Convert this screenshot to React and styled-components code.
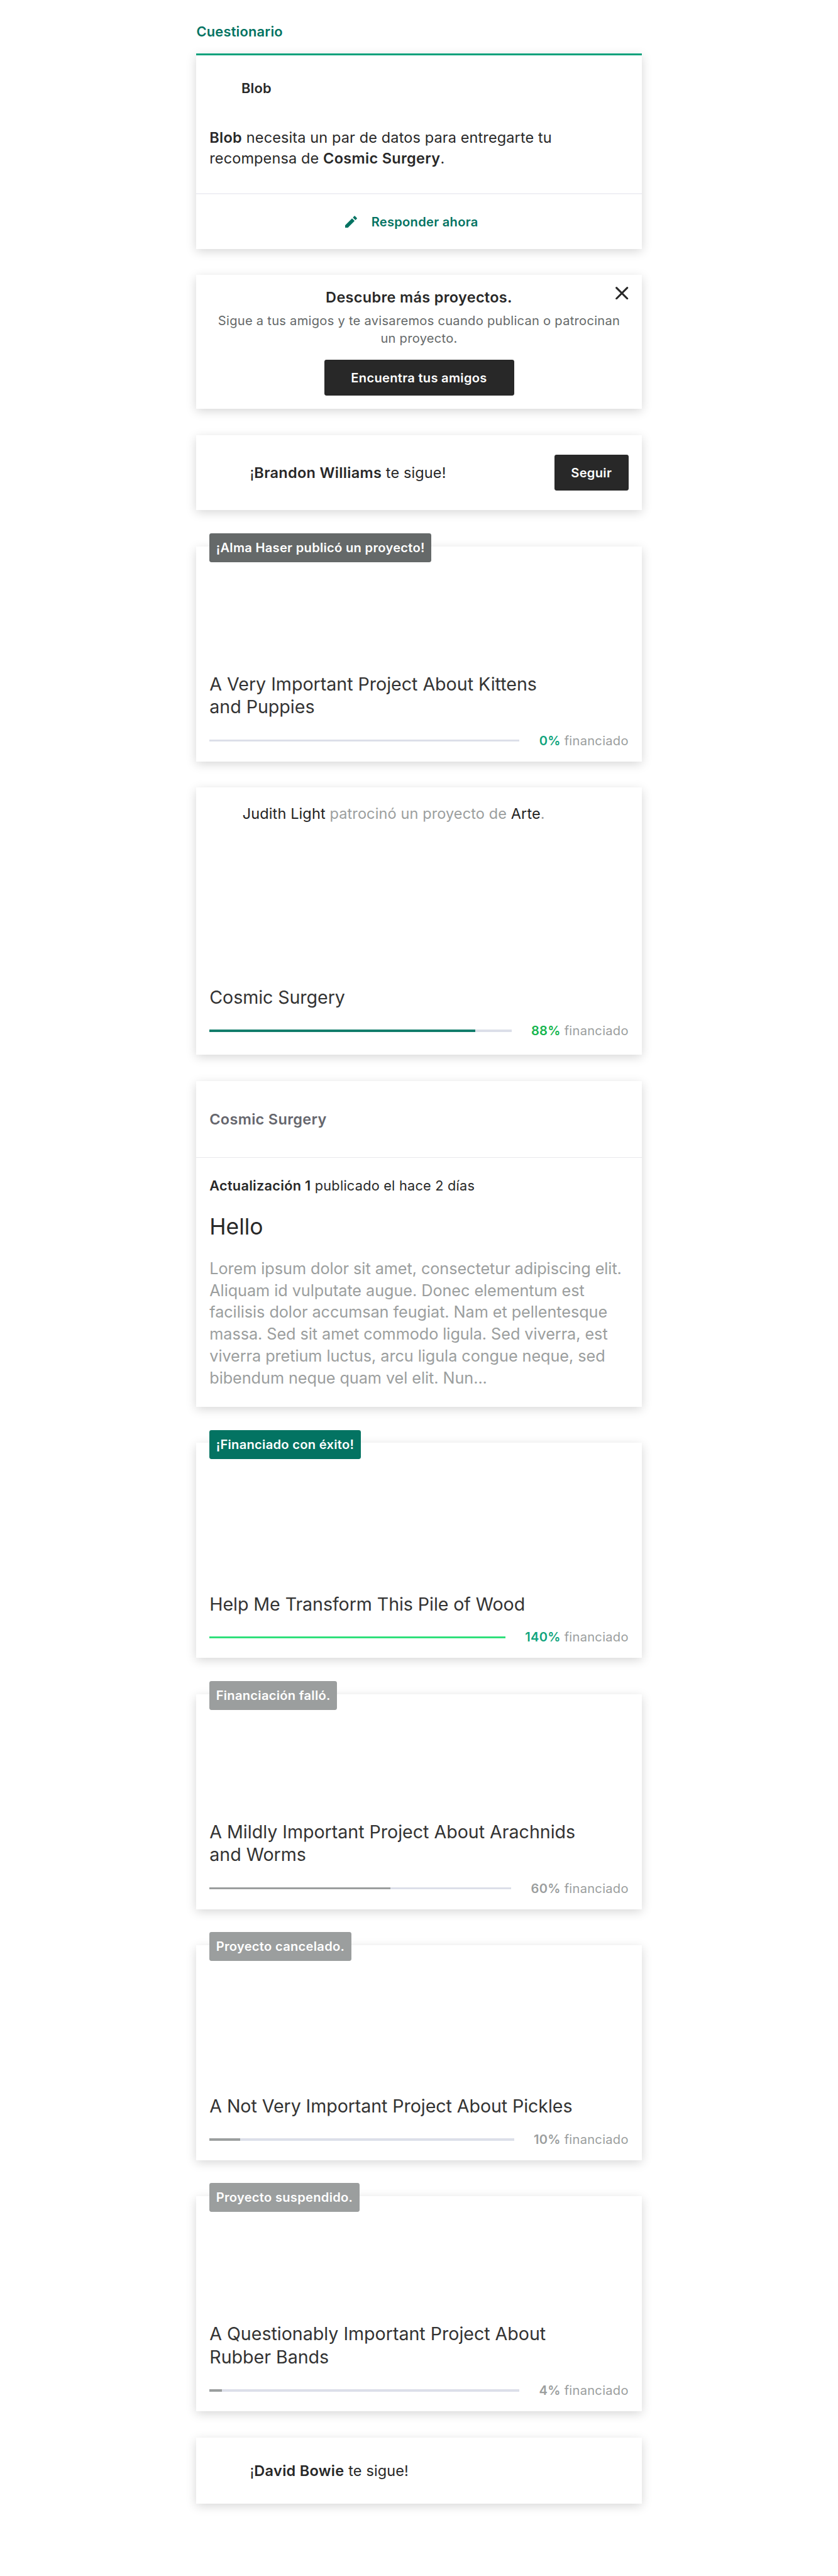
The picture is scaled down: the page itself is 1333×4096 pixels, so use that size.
import React from "react";
import styled, { createGlobalStyle } from "styled-components";

/* 1rem = 10 design units */
const GlobalStyle = createGlobalStyle`
  html { font-size: 8.6784px; }
  body {
    margin: 0;
    background: #fff;
    color: #282828;
    font-family: "Inter", "Liberation Sans", sans-serif;
  }
  *, *::before, *::after { box-sizing: border-box; }
`;

const Feed = styled.main`
  width: 81.6rem;
  height: 472rem;
  margin: 0 auto;
  padding-top: 4.25rem;
`;

const FeedHeading = styled.h1`
  margin: 0 0 2.35rem;
  font-size: 2.52rem;
  font-weight: 600;
  line-height: 3.2rem;
  letter-spacing: 0.009em;
  color: #037362;
`;

const Card = styled.section`
  position: relative;
  height: ${(p) => p.$height}rem;
  margin-top: ${(p) => p.$gap ?? 4.8}rem;
  background: #fff;
  box-shadow: 0 0.5rem 1.8rem rgba(0, 0, 0, 0.17);
`;

const SurveyCard = styled(Card)`
  display: flex;
  flex-direction: column;
  border-top: 0.4rem solid #03a17b;
`;

const Avatar = styled.span`
  flex: none;
  width: ${(p) => p.$size}rem;
  height: ${(p) => p.$size}rem;
  border-radius: 50%;
  margin-right: ${(p) => p.$gap}rem;
`;

const CreatorRow = styled.header`
  display: flex;
  align-items: center;
  height: 7.2rem;
  margin: 2.5rem 2.4rem 0;
`;

const CreatorName = styled.span`
  font-size: 2.52rem;
  font-weight: 600;
  line-height: 3.2rem;
  letter-spacing: 0.009em;
`;

const BodyText = styled.p`
  margin: 0;
  font-size: 2.71rem;
  line-height: 3.83rem;
  letter-spacing: 0.005em;
  color: ${(p) => (p.$muted ? "#9b9e9e" : "#282828")};
`;

const Strong = styled.strong`
  font-weight: 600;
  letter-spacing: 0.013em;
`;

const Name = styled.span`
  color: #222;
`;

const SurveyMessage = styled(BodyText)`
  flex: 1;
  padding: 3.38rem 2.4rem 0;
`;

const SurveyAction = styled.button`
  display: flex;
  align-items: center;
  justify-content: center;
  gap: 2.6rem;
  height: 10.2rem;
  padding: 0 2.7rem 0 0;
  border: 0;
  border-top: 0.24rem solid #efeff4;
  background: none;
  font: 600 2.32rem/3.2rem "Inter", "Liberation Sans", sans-serif;
  letter-spacing: 0.013em;
  color: #037362;

  svg {
    width: 2.2rem;
    height: 2.23rem;
    fill: currentColor;
  }
`;

const FindFriendsCard = styled(Card)`
  display: flex;
  flex-direction: column;
  align-items: center;
  padding: 2.41rem 0.8rem 0;
  text-align: center;
`;

const FindFriendsTitle = styled.h2`
  margin: 0 0 1rem;
  font-size: 2.71rem;
  font-weight: 600;
  line-height: 3.4rem;
  letter-spacing: 0.013em;
`;

const FindFriendsText = styled.p`
  width: 75.2rem;
  margin: 0 0 2.23rem;
  font-size: 2.32rem;
  line-height: 3.23rem;
  letter-spacing: 0.013em;
  color: #656969;
`;

const DarkButton = styled.button`
  flex: none;
  width: ${(p) => p.$width}rem;
  height: 6.6rem;
  padding: 0;
  border: 0;
  border-radius: 0.4rem;
  background: #282828;
  color: #fff;
  font: 600 2.32rem/3.2rem "Inter", "Liberation Sans", sans-serif;
  letter-spacing: 0.014em;
`;

const CloseButton = styled.button`
  position: absolute;
  top: 2.1rem;
  right: 2.4rem;
  display: flex;
  padding: 0;
  border: 0;
  background: none;

  svg {
    width: 2.35rem;
    height: 2.35rem;
    stroke: #282828;
    stroke-width: 3.5;
    stroke-linecap: round;
  }
`;

const FollowCard = styled(Card)`
  display: flex;
  align-items: center;
  padding: 0 2.4rem;
`;

const FollowText = styled(BodyText)`
  flex: 1;
`;

const ProjectCardBox = styled(Card)`
  display: flex;
  flex-direction: column;
  padding: 0 2.4rem ${(p) => p.$bottom ?? 2.3}rem;
`;

const Badge = styled.span`
  position: absolute;
  top: -2.4rem;
  left: 2.4rem;
  height: 5.3rem;
  padding: 0 1.2rem;
  border-radius: 0.4rem;
  background: ${(p) => p.$tone};
  color: #fff;
  font-size: 2.32rem;
  font-weight: 600;
  line-height: 5.3rem;
  letter-spacing: 0.014em;
  white-space: nowrap;
`;

const BackedRow = styled.div`
  display: flex;
  align-items: center;
  height: 4.8rem;
  margin-top: 2.33rem;
`;

const ProjectTitle = styled.h3`
  margin: auto 0 2.53rem;
  font-size: 3.3rem;
  font-weight: 400;
  line-height: ${(p) => (p.$single ? 4 : 4.2)}rem;
  letter-spacing: ${(p) => (p.$single ? "-0.003em" : "-0.001em")};
  color: #333;
`;

const Funding = styled.div`
  display: flex;
  align-items: center;
  gap: 3.6rem;
  height: 3rem;
`;

const Track = styled.div`
  flex: 1;
  height: 0.4rem;
  background: #dcdfe9;
`;

const Fill = styled.div`
  height: 100%;
  background: ${(p) => p.$color};
`;

const FundingLabel = styled.span`
  font-size: 2.32rem;
  line-height: 3rem;
  letter-spacing: 0.013em;
  color: #9b9e9e;
  white-space: nowrap;
`;

const Percent = styled.b`
  font-weight: 600;
  color: ${(p) => p.$color};
`;

const UpdateHeader = styled.header`
  display: flex;
  align-items: center;
  height: 14rem;
  padding: 0 2.4rem;
  border-bottom: 0.2rem solid #e8e9eb;
  font-size: 2.71rem;
  font-weight: 600;
  line-height: 3.4rem;
  letter-spacing: 0.013em;
  color: #65666d;
`;

const UpdateBody = styled.div`
  padding: 3.6rem 2.4rem 0;
`;

const UpdateMeta = styled.p`
  margin: 0;
  font-size: 2.5rem;
  line-height: 3.2rem;
  letter-spacing: 0.011em;
`;

const UpdateTitle = styled.h3`
  margin: 3.5rem 0 3.24rem;
  font-size: 4.08rem;
  font-weight: 400;
  line-height: 4.8rem;
`;

const UpdateText = styled.p`
  margin: 0;
  font-size: 2.91rem;
  line-height: 4.01rem;
  letter-spacing: -0.0025em;
  color: #9b9e9e;
`;

const PencilIcon = () => (
  <svg viewBox="0 0 22 22.3" aria-hidden="true">
    <path d="M0 22.3V17.7L12.7 4.9L17.4 9.6L4.7 22.3Z" />
    <path d="M14.2 3.4L16.8 0.7Q17.4 0.1 18 0.7L21.6 4.3Q22.2 4.9 21.6 5.5L18.9 8.1Z" />
  </svg>
);

const CloseIcon = () => (
  <svg viewBox="0 0 23.5 23.5" aria-hidden="true">
    <path d="M1.9 1.9L21.6 21.6M21.6 1.9L1.9 21.6" />
  </svg>
);

function ProjectCard({ badge, tone, title, percent, percentColor, fill, gap = 6.6, height = 39.4, bottom, children }) {
  return (
    <ProjectCardBox $height={height} $gap={gap} $bottom={bottom}>
      {badge && <Badge $tone={tone}>{badge}</Badge>}
      {children}
      <ProjectTitle $single={title.length === 1}>
        {title.map((line, i) => (
          <React.Fragment key={line}>
            {i > 0 && <br />}
            {line}
          </React.Fragment>
        ))}
      </ProjectTitle>
      <Funding>
        <Track>
          <Fill $color={fill} style={{ width: `${Math.min(percent, 100)}%` }} />
        </Track>
        <FundingLabel>
          <Percent $color={percentColor}>{percent}%</Percent> financiado
        </FundingLabel>
      </Funding>
    </ProjectCardBox>
  );
}

function Follow({ name, height, button }) {
  return (
    <FollowCard $height={height}>
      <Avatar $size={6} $gap={1.4} />
      <FollowText>
        ¡<Strong>{name}</Strong> te sigue!
      </FollowText>
      {button && <DarkButton $width={13.6}>{button}</DarkButton>}
    </FollowCard>
  );
}

const gray = "#9b9e9e";

const endedProjects = [
  { badge: "¡Financiado con éxito!", tone: "#037362", title: ["Help Me Transform This Pile of Wood"], percent: 140, percentColor: "#0fa47d", fill: "#2fe07b" },
  { badge: "Financiación falló.", tone: gray, title: ["A Mildly Important Project About Arachnids", "and Worms"], percent: 60, percentColor: gray, fill: gray },
  { badge: "Proyecto cancelado.", tone: gray, title: ["A Not Very Important Project About Pickles"], percent: 10, percentColor: gray, fill: gray },
  { badge: "Proyecto suspendido.", tone: gray, title: ["A Questionably Important Project About", "Rubber Bands"], percent: 4, percentColor: gray, fill: gray },
];

export default function App() {
  return (
    <>
      <GlobalStyle />
      <Feed>
        <FeedHeading>Cuestionario</FeedHeading>

        <SurveyCard $height={35.8} $gap={0}>
          <CreatorRow>
            <Avatar $size={4.8} $gap={1.05} />
            <CreatorName>Blob</CreatorName>
          </CreatorRow>
          <SurveyMessage>
            <Strong>Blob</Strong> necesita un par de datos para entregarte tu
            <br />
            recompensa de <Strong>Cosmic Surgery</Strong>.
          </SurveyMessage>
          <SurveyAction>
            <PencilIcon />
            Responder ahora
          </SurveyAction>
        </SurveyCard>

        <FindFriendsCard $height={24.5}>
          <FindFriendsTitle>Descubre más proyectos.</FindFriendsTitle>
          <FindFriendsText>
            Sigue a tus amigos y te avisaremos cuando publican o patrocinan un proyecto.
          </FindFriendsText>
          <DarkButton $width={34.8}>Encuentra tus amigos</DarkButton>
          <CloseButton aria-label="Cerrar">
            <CloseIcon />
          </CloseButton>
        </FindFriendsCard>

        <Follow name="Brandon Williams" height={13.8} button="Seguir" />

        <ProjectCard
          badge="¡Alma Haser publicó un proyecto!"
          tone="#656969"
          title={["A Very Important Project About Kittens", "and Puppies"]}
          percent={0}
          percentColor="#0fa47d"
          fill="#037362"
        />

        <ProjectCard
          title={["Cosmic Surgery"]}
          percent={88}
          percentColor="#14b54e"
          fill="#127d6b"
          gap={4.8}
          height={49}
          bottom={2.94}
        >
          <BackedRow>
            <Avatar $size={4.8} $gap={1.25} />
            <BodyText $muted>
              <Name>Judith Light</Name> patrocinó un proyecto de <Name>Arte</Name>.
            </BodyText>
          </BackedRow>
        </ProjectCard>

        <Card $height={59.7}>
          <UpdateHeader>Cosmic Surgery</UpdateHeader>
          <UpdateBody>
            <UpdateMeta>
              <Strong>Actualización 1</Strong> publicado el hace 2 días
            </UpdateMeta>
            <UpdateTitle>Hello</UpdateTitle>
            <UpdateText>
              Lorem ipsum dolor sit amet, consectetur adipiscing elit. Aliquam id vulputate augue. Donec elementum est
              facilisis dolor accumsan feugiat. Nam et pellentesque massa. Sed sit amet commodo ligula. Sed viverra, est
              viverra pretium luctus, arcu ligula congue neque, sed bibendum neque quam vel elit. Nun...
            </UpdateText>
          </UpdateBody>
        </Card>

        {endedProjects.map((project) => (
          <ProjectCard key={project.badge} {...project} />
        ))}

        <Follow name="David Bowie" height={12.2} />
      </Feed>
    </>
  );
}
